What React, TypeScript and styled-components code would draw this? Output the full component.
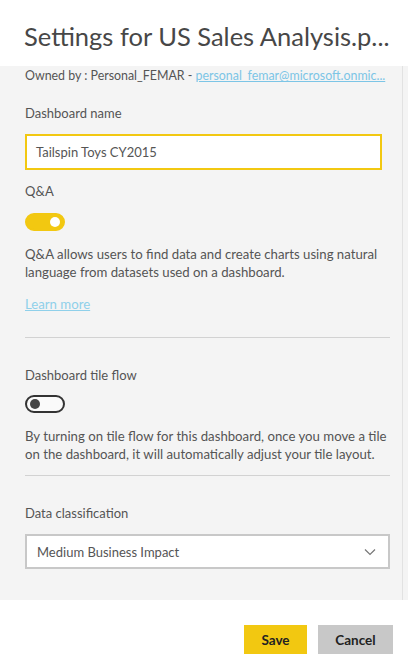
import React from "react";
import styled, { createGlobalStyle } from "styled-components";

const Global = createGlobalStyle`
  html, body { margin: 0; padding: 0; background: #ffffff; }
  body { font-family: Lato, "Noto Sans", Arial, sans-serif; }
  * { box-sizing: border-box; }
`;

const Page = styled.div`
  width: 408px;
  height: 665px;
  display: flex;
  flex-direction: column;
  background: #ffffff;
  overflow: hidden;
`;

const Header = styled.div`
  height: 66px;
  padding: 19px 0 0 24px;
  flex-shrink: 0;
`;

const Title = styled.h1`
  margin: 0;
  font-family: Lato, sans-serif;
  font-weight: 400;
  font-size: 25.5px;
  line-height: 34px;
  color: #474747;
  white-space: nowrap;
`;

const Panel = styled.div`
  height: 534px;
  display: flex;
  background: #f4f4f4;
  flex-shrink: 0;
`;

const Content = styled.div`
  flex: 1;
  min-width: 0;
  padding: 0 11px 0 25px;
  display: flex;
  flex-direction: column;
`;

const Track = styled.div`
  width: 6px;
  border-left: 1px solid #e2e2e2;
`;

const Owner = styled.div`
  font-size: 12.4px;
  line-height: 18px;
  color: #555;
  padding-top: 1px;
  white-space: nowrap;
`;

const Link = styled.a`
  color: #7cc5e6;
  text-decoration: underline;
`;

const Label = styled.div<{ $top: number }>`
  font-size: 13px;
  line-height: 18px;
  color: #555;
  margin-top: ${(p) => p.$top}px;
`;

const Input = styled.div`
  margin-top: 12px;
  width: 357px;
  height: 36px;
  border: 2px solid #f2c811;
  background: #fff;
  padding-left: 9px;
  display: flex;
  align-items: center;
  font-size: 13px;
  color: #555;
`;

const Toggle = styled.div<{ $on: boolean; $top: number }>`
  margin-top: ${(p) => p.$top}px;
  width: 40px;
  height: 18px;
  border-radius: 9px;
  display: flex;
  align-items: center;
  justify-content: ${(p) => (p.$on ? "flex-end" : "flex-start")};
  padding: 0 3px;
  background: ${(p) => (p.$on ? "#f2c811" : "#fafafa")};
  border: ${(p) => (p.$on ? "2px solid #f2c811" : "2px solid #333")};
`;

const Thumb = styled.div<{ $on: boolean }>`
  width: 10px;
  height: 10px;
  border-radius: 50%;
  background: ${(p) => (p.$on ? "#ffffff" : "#444")};
`;

const Desc = styled.p<{ $top: number }>`
  margin: ${(p) => p.$top}px 0 0;
  font-size: 13.2px;
  line-height: 17.5px;
  color: #555;
`;

const LearnMore = styled.a`
  margin-top: 14px;
  font-size: 13.2px;
  line-height: 18px;
  color: #8fd0ea;
  text-decoration: underline;
  align-self: flex-start;
`;

const Divider = styled.hr<{ $top: number }>`
  margin: ${(p) => p.$top}px 0 0;
  width: 365px;
  border: none;
  border-top: 1px solid #d2d2d2;
`;

const Select = styled.div`
  margin-top: 12px;
  width: 365px;
  height: 35px;
  border: 2px solid #c8c8c8;
  background: #fff;
  padding: 0 12px 0 10px;
  display: flex;
  align-items: center;
  justify-content: space-between;
  font-size: 13px;
  color: #555;
`;

const Footer = styled.div`
  flex: 1;
  display: flex;
  justify-content: flex-end;
  align-items: flex-start;
  gap: 11px;
  padding: 25px 15px 0 0;
`;

const Button = styled.button<{ $primary?: boolean }>`
  height: 29px;
  border: none;
  font-family: Lato, sans-serif;
  font-size: 13.5px;
  font-weight: 700;
  color: #222;
  background: ${(p) => (p.$primary ? "#f2c811" : "#c8c8c8")};
  width: ${(p) => (p.$primary ? "63px" : "75px")};
  padding: 0;
`;

export default function App() {
  return (
    <Page>
      <Global />
      <Header>
        <Title>Settings for US Sales Analysis.p...</Title>
      </Header>
      <Panel>
        <Content>
          <Owner>
            Owned by : Personal_FEMAR - <Link>personal_femar@microsoft.onmic...</Link>
          </Owner>
          <Label $top={19}>Dashboard name</Label>
          <Input>Tailspin Toys CY2015</Input>
          <Label $top={12}>Q&amp;A</Label>
          <Toggle $on $top={13}>
            <Thumb $on />
          </Toggle>
          <Desc $top={15}>
            Q&amp;A allows users to find data and create charts using natural language from datasets used on a dashboard.
          </Desc>
          <LearnMore>Learn more</LearnMore>
          <Divider $top={24} />
          <Label $top={28}>Dashboard tile flow</Label>
          <Toggle $on={false} $top={11}>
            <Thumb $on={false} />
          </Toggle>
          <Desc $top={15}>
            By turning on tile flow for this dashboard, once you move a tile on the dashboard, it will automatically adjust your tile layout.
          </Desc>
          <Divider $top={12} />
          <Label $top={28}>Data classification</Label>
          <Select>
            <span>Medium Business Impact</span>
            <svg width="12" height="8" viewBox="0 0 12 8">
              <path d="M1 1.5 L6 6.5 L11 1.5" fill="none" stroke="#777" strokeWidth="1.2" />
            </svg>
          </Select>
        </Content>
        <Track />
      </Panel>
      <Footer>
        <Button $primary>Save</Button>
        <Button>Cancel</Button>
      </Footer>
    </Page>
  );
}
